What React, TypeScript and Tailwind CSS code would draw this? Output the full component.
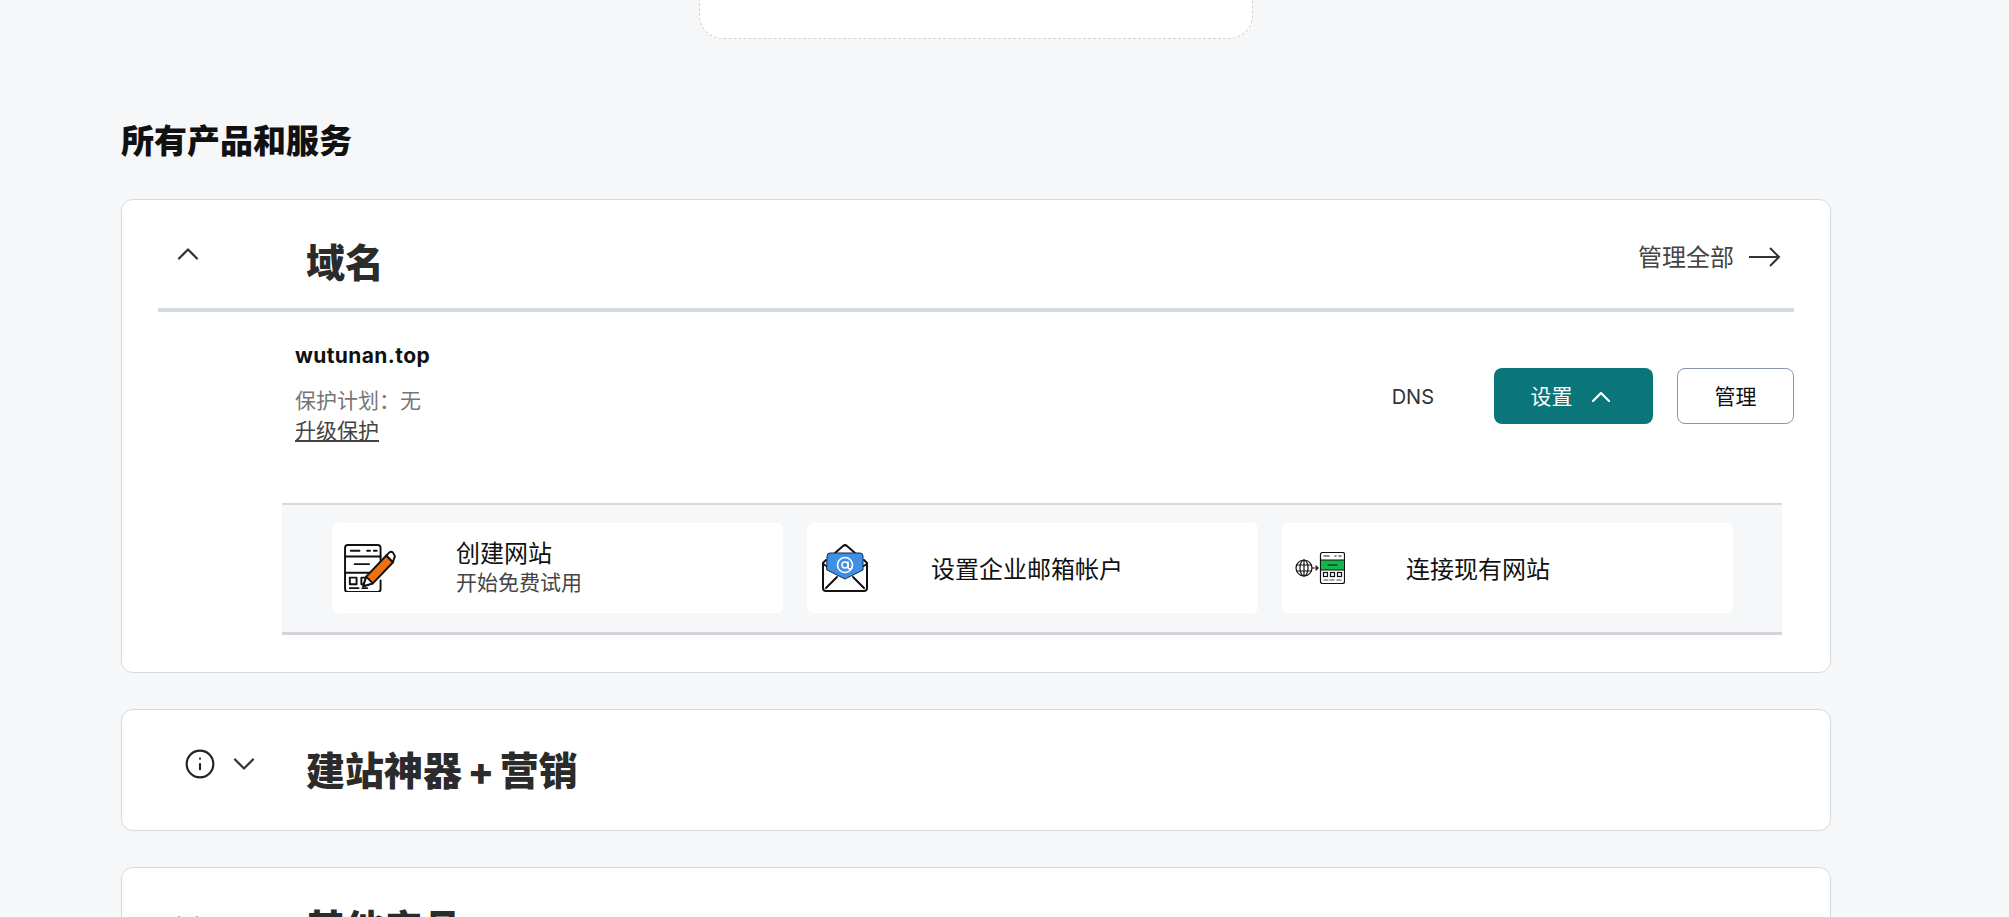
import { ChevronDown, ChevronUp, Info } from "lucide-react";

function PencilIcon() {
	return (
		<svg width="52" height="48" viewBox="0 0 54 50" fill="none" stroke="#111" strokeWidth="2" strokeLinecap="round" strokeLinejoin="round">
			<path d="M38 17V4a3 3 0 0 0-3-3H4a3 3 0 0 0-3 3v43a3 3 0 0 0 3 3h31a3 3 0 0 0 3-3v-9" />
			<path d="M1 13h37M1 30h30" />
			<path d="M7 7h9M24 7h3M31 7h3M11 21h15" />
			<rect x="6" y="35" width="7" height="7" />
			<rect x="18" y="35" width="6" height="7" />
			<path d="M6 46h9M19 46h5" />
			<path d="M20 44l3-10 21-22 7 7-21 22z" fill="#f07010" />
			<path d="M44 12l3-3a3 3 0 0 1 4 0l1 2a3 3 0 0 1 0 4l-1 4z" fill="#fff" />
			<path d="M20 44l3-10 7 7z" fill="#fff" />
		</svg>
	);
}

function MailIcon() {
	return (
		<svg width="48" height="48" viewBox="0 0 48 48" fill="none" strokeLinecap="round" strokeLinejoin="round">
			<path d="M5 16l-3 3v25a3 3 0 0 0 3 3h38a3 3 0 0 0 3-3V19l-3-3" stroke="#111" strokeWidth="2" />
			<path d="M14 9l8-7a3 3 0 0 1 4 0l8 7" stroke="#111" strokeWidth="2" />
			<path d="M2 20l22 13 22-13M5 44l11-11M43 44L32 33" stroke="#111" strokeWidth="2" />
			<path d="M6 12a3 3 0 0 1 3-3h30a3 3 0 0 1 3 3v14L24 35 6 26z" fill="#3f8fe6" stroke="#1a2a44" strokeWidth="1" />
			<circle cx="24" cy="21" r="7.5" stroke="#fff" strokeWidth="1.6" />
			<circle cx="24" cy="21" r="3" stroke="#fff" strokeWidth="1.5" />
			<path d="M27 18v5a2 2 0 0 0 4 0" stroke="#fff" strokeWidth="1.5" />
		</svg>
	);
}

function ConnectIcon() {
	return (
		<svg width="50" height="32" viewBox="0 0 50 32" fill="none" stroke="#111" strokeWidth="1.2" strokeLinecap="round">
			<circle cx="9" cy="16" r="8" />
			<ellipse cx="9" cy="16" rx="4" ry="8" />
			<path d="M9 8v16M1.5 13h15M1.5 19h15" />
			<path d="M17 16h6M21 14l2 2-2 2" />
			<rect x="25.5" y="0.5" width="24" height="31" rx="2" />
			<rect x="26" y="8" width="23" height="10" fill="#12b84c" stroke="none" />
			<path d="M26 8h23M26 18h23M33 13h9" />
			<path d="M29 4h5M40 4h1M44 4h2" strokeWidth="1.5" stroke="#666" />
			<rect x="28.5" y="20.5" width="4" height="4" />
			<rect x="35.5" y="20.5" width="4" height="4" />
			<rect x="42.5" y="20.5" width="4" height="4" />
			<path d="M29 28h4M35 28h4M42 28h4" strokeWidth="1.5" stroke="#888" />
		</svg>
	);
}

function LongArrow() {
	return (
		<svg width="32" height="22" viewBox="0 0 32 22" fill="none" stroke="#333" strokeWidth="2">
			<path d="M0 11h30M21 2l9 9-9 9" />
		</svg>
	);
}

function SetupCard({ icon, title, sub, iconClass }: { icon: React.ReactNode; title: string; sub?: string; iconClass: string }) {
	return (
		<div className="flex h-[90px] flex-1 items-center rounded-md bg-white">
			<div className={iconClass}>{icon}</div>
			<div className={sub ? "" : "pt-[3px]"}>
				<div className="text-[24px] leading-[30px] text-[#111]">{title}</div>
				{sub && <div className="text-[21px] leading-[28px] text-[#444]">{sub}</div>}
			</div>
		</div>
	);
}

export default function App() {
	return (
		<div className="h-[917px] overflow-hidden bg-[#f5f7f8] font-['Inter','Noto_Sans_CJK_SC',sans-serif] text-[#111]">
			<div className="mx-auto h-[39px] w-[554px] -translate-x-[29px] rounded-b-[24px] border border-t-0 border-dashed border-[#d0d3d6] bg-white" />

			<div className="ml-[121px] w-[1710px]">
				<h2 className="mt-[80px] text-[33px] leading-[44px] font-extrabold text-[#111]">所有产品和服务</h2>

				<section className="mt-[36px] h-[474px] rounded-xl border border-[#d4dbe0] bg-white">
					<div className="mx-[36px] flex h-[112px] border-b-[4px] border-[#d4dbe0]">
						<div className="flex w-[148px] pt-[36px] pl-[12px]">
							<ChevronUp className="h-9 w-9 text-[#333]" strokeWidth={1.5} />
						</div>
						<h3 className="pt-[38px] text-[39px] leading-[50px] font-extrabold text-[#2b2b2b]">域名</h3>
						<div className="ml-auto flex h-fit items-center gap-[15px] pt-[38px] pr-[13px] text-[24px] leading-[34px] text-[#444]">
							<span className="pt-[3px]">管理全部</span>
							<LongArrow />
						</div>
					</div>

					<div className="mr-[36px] ml-[173px] flex h-[191px] items-start justify-between">
						<div className="pt-[29px]">
							<div className="text-[21px] leading-[30px] font-bold tracking-[0.4px] text-[#111]">wutunan.top</div>
							<div className="mt-[15px] text-[21px] leading-[30px] text-[#767676]">保护计划：无</div>
							<div className="text-[21px] leading-[30px] text-[#444] underline underline-offset-2">升级保护</div>
						</div>
						<div className="flex items-center pt-[56px]">
							<span className="mr-[60px] pt-[2px] text-[20px] text-[#333]">DNS</span>
							<button className="flex h-[56px] w-[159px] items-center justify-center gap-3 rounded-lg bg-[#0b767a] pt-[2px] text-[21px] text-white">
								设置
								<ChevronUp className="h-8 w-8" strokeWidth={1.7} />
							</button>
							<button className="ml-[24px] h-[56px] w-[117px] rounded-lg border border-[#8995a9] bg-white pt-[2px] text-[21px] text-[#111]">管理</button>
						</div>
					</div>

					<div className="mr-[48px] ml-[160px] flex h-[132px] gap-6 border-t-2 border-b-[3px] border-t-[#d8d8d8] border-b-[#d2d4d7] bg-[#f5f7f8] pt-[18px] pr-[49px] pl-[50px]">
						<SetupCard icon={<PencilIcon />} title="创建网站" sub="开始免费试用" iconClass="w-[124px] pl-3" />
						<SetupCard icon={<MailIcon />} title="设置企业邮箱帐户" iconClass="w-[124px] pl-[14px]" />
						<SetupCard icon={<ConnectIcon />} title="连接现有网站" iconClass="w-[124px] pl-[13px]" />
					</div>
				</section>

				<section className="mt-[36px] flex h-[122px] rounded-xl border border-[#d4dbe0] bg-white">
					<div className="flex w-[184px] items-start pt-[38px] pl-[62px]">
						<Info className="h-[32px] w-[32px] text-[#222]" strokeWidth={1.6} />
						<ChevronDown className="-mt-[2px] ml-[10px] h-9 w-9 text-[#333]" strokeWidth={1.5} />
					</div>
					<h3 className="pt-[36px] text-[39px] leading-[50px] font-extrabold text-[#2b2b2b] [word-spacing:-3px]">建站神器 + 营销</h3>
				</section>

				<section className="mt-[36px] flex h-[122px] rounded-xl border border-[#d4dbe0] bg-white">
					<div className="flex w-[184px] pt-[36px] pl-[48px]">
						<ChevronDown className="h-9 w-9 text-[#333]" strokeWidth={1.5} />
					</div>
					<h3 className="pt-[36px] text-[39px] leading-[50px] font-extrabold text-[#2b2b2b]">其他产品</h3>
				</section>
			</div>
		</div>
	);
}
